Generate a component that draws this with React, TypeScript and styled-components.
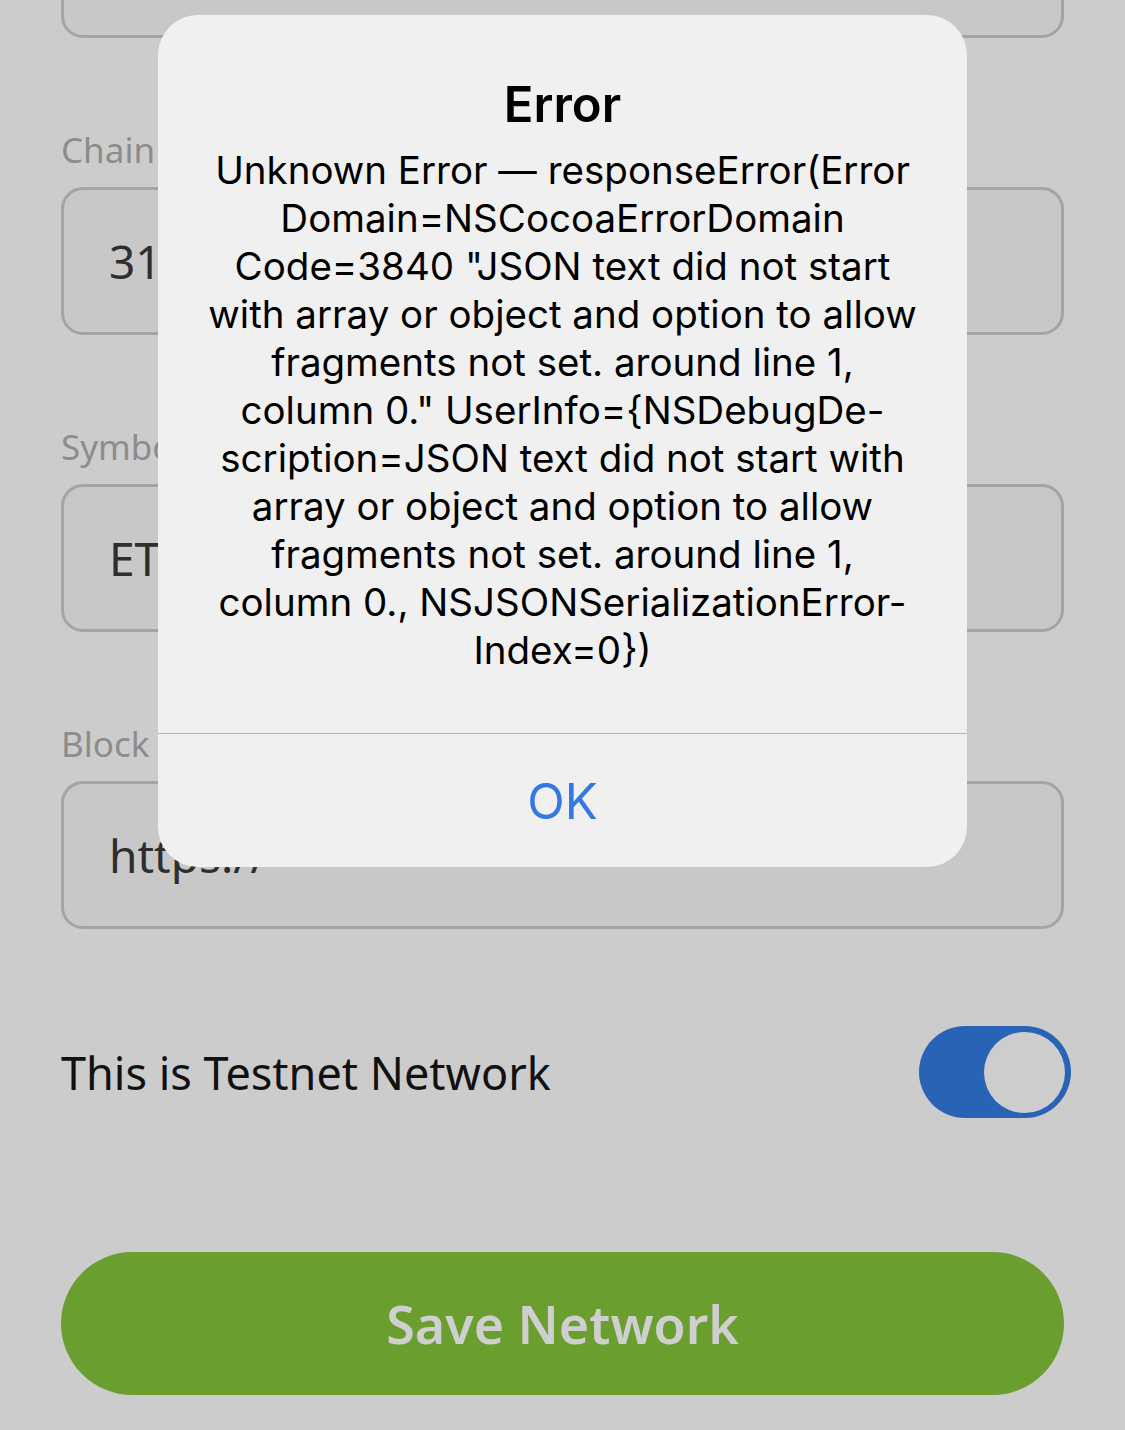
import styled, { createGlobalStyle } from 'styled-components';

const GlobalStyle = createGlobalStyle`
  html, body {
    margin: 0;
    padding: 0;
    background: #cccccc;
  }
  body {
    font-family: "Noto Sans", "Open Sans", sans-serif;
  }
`;

const Page = styled.div`
  position: relative;
  width: 1125px;
  height: 1430px;
  overflow: hidden;
  background: #cccccc;
`;

const Form = styled.div`
  display: flex;
  flex-direction: column;
  padding: 0 61px 0 61px;
  margin-top: -110px;
`;

const Field = styled.div`
  display: flex;
  flex-direction: column;
  & + & {
    margin-top: 88px;
  }
`;

const Label = styled.div`
  font-size: 35px;
  line-height: 48px;
  color: #8c8c8c;
  margin-bottom: 13px;
`;

const InputBox = styled.div`
  box-sizing: border-box;
  height: 148px;
  border: 3px solid #a4a4a4;
  border-radius: 22px;
  background: #c8c8c8;
  display: flex;
  align-items: center;
  padding-left: 45px;
  font-size: 46px;
  color: #2e2e2e;
`;

const ToggleRow = styled.div`
  display: flex;
  align-items: center;
  justify-content: space-between;
  margin-top: 97px;
  margin-right: -7px;
`;

const ToggleLabel = styled.span`
  font-size: 45px;
  color: #111111;
`;

const Switch = styled.div<{ on: boolean }>`
  box-sizing: border-box;
  width: 152px;
  height: 92px;
  border-radius: 46px;
  background: ${(p) => (p.on ? '#2963b6' : '#b5b5b5')};
  display: flex;
  align-items: center;
  justify-content: ${(p) => (p.on ? 'flex-end' : 'flex-start')};
  padding: 0 6px;
`;

const Knob = styled.div`
  width: 81px;
  height: 81px;
  border-radius: 50%;
  background: #cdcdcd;
`;

const SaveButton = styled.div`
  margin-top: 134px;
  height: 143px;
  border-radius: 72px;
  background: #6a9e2f;
  display: flex;
  align-items: center;
  justify-content: center;
  font-size: 52px;
  font-weight: 600;
  color: #cfcfcf;
`;

const Alert = styled.div`
  position: absolute;
  left: 158px;
  top: 15px;
  width: 809px;
  height: 852px;
  border-radius: 40px;
  background: #f0f0f0;
  display: flex;
  flex-direction: column;
  font-family: Inter, "Liberation Sans", sans-serif;
  overflow: hidden;
`;

const AlertBody = styled.div`
  flex: 1;
  display: flex;
  flex-direction: column;
  align-items: center;
  padding-top: 62px;
  border-bottom: 1.5px solid #b4b4b4;
`;

const AlertTitle = styled.div`
  font-size: 49px;
  line-height: 56px;
  font-weight: 600;
  color: #000000;
  margin-bottom: 13px;
`;

const AlertLine = styled.div`
  font-size: 38.5px;
  line-height: 48px;
  color: #000000;
  text-align: center;
  white-space: nowrap;
`;

const AlertAction = styled.div`
  height: 131px;
  display: flex;
  align-items: center;
  justify-content: center;
  font-size: 49px;
  color: #3478e6;
  padding-top: 2px;
`;

const messageLines = [
  'Unknown Error \u2014 responseError(Error',
  'Domain=NSCocoaErrorDomain',
  'Code=3840 "JSON text did not start',
  'with array or object and option to allow',
  'fragments not set. around line 1,',
  'column 0." UserInfo={NSDebugDe-',
  'scription=JSON text did not start with',
  'array or object and option to allow',
  'fragments not set. around line 1,',
  'column 0., NSJSONSerializationError-',
  'Index=0})',
];

function App() {
  return (
    <Page>
      <GlobalStyle />
      <Form>
        <Field>
          <InputBox />
        </Field>
        <Field>
          <Label>Chain ID</Label>
          <InputBox>3141</InputBox>
        </Field>
        <Field>
          <Label>Symbol</Label>
          <InputBox>ETH</InputBox>
        </Field>
        <Field>
          <Label>Block Explorer URL</Label>
          <InputBox>https://</InputBox>
        </Field>
        <ToggleRow>
          <ToggleLabel>This is Testnet Network</ToggleLabel>
          <Switch on>
            <Knob />
          </Switch>
        </ToggleRow>
        <SaveButton>Save Network</SaveButton>
      </Form>
      <Alert>
        <AlertBody>
          <AlertTitle>Error</AlertTitle>
          {messageLines.map((line) => (
            <AlertLine key={line}>{line}</AlertLine>
          ))}
        </AlertBody>
        <AlertAction>OK</AlertAction>
      </Alert>
    </Page>
  );
}

export default App;
